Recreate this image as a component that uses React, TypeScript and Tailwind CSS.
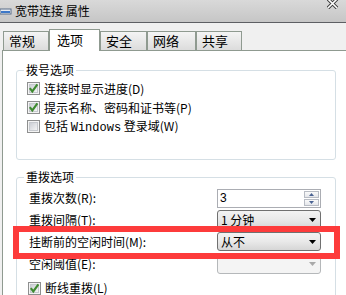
import React from "react";

const cjk = { fontFamily: '"Noto Sans CJK SC", "Noto Sans", sans-serif' };

const CheckBox = ({ checked }: { checked: boolean }) => (
    <svg width="13" height="13" viewBox="0 0 13 13" className="shrink-0">
        <defs>
            <linearGradient id="cbg" x1="0" y1="0" x2="1" y2="1">
                <stop offset="0" stopColor="#c9ccd2" />
                <stop offset="1" stopColor="#f7f7f7" />
            </linearGradient>
        </defs>
        <rect x="0.5" y="0.5" width="12" height="12" fill="#f4f4f4" stroke="#8e8f8f" />
        <rect x="2.5" y="2.5" width="8" height="8" fill="url(#cbg)" stroke="#c6c9ce" />
        {checked && (
            <path d="M2.8 6.2 L5.3 9.4 L10.4 2.4" fill="none" stroke="#3f8a30" strokeWidth="2.1" />
        )}
    </svg>
);

const Arrow = ({ color = "#000" }: { color?: string }) => (
    <svg width="7" height="4" viewBox="0 0 7 4">
        <path d="M0 0 H7 L3.5 4 Z" fill={color} />
    </svg>
);

const Combo = ({ value, disabled }: { value?: string; disabled?: boolean }) => (
    <div
        className={
            disabled
                ? "w-[104px] h-[19px] rounded-[3px] border border-[#b5b8ba] bg-[#f4f4f4] flex items-center justify-end pr-[4px]"
                : "w-[104px] h-[19px] rounded-[3px] border border-[#707070] bg-linear-to-b from-[#f3f3f3] via-[#e9e9e9] to-[#d6d6d6] flex items-center justify-between pl-[3px] pr-[4px]"
        }
    >
        {value && <span className="text-[12px] leading-[14px] text-black">{value}</span>}
        <Arrow color={disabled ? "#a9a9a9" : "#000"} />
    </div>
);

const SpinBox = () => (
    <div className="w-[104px] h-[19px] border border-[#abadb3] bg-white flex items-center justify-between pl-[2px] pr-[1px]">
        <span className="text-[12px] leading-[14px] text-black" style={{ fontFamily: '"Liberation Sans", sans-serif' }}>3</span>
        <div className="flex flex-col gap-[1px]">
            {[0, 1].map((i) => (
                <div key={i} className="w-[15px] h-[7px] border border-[#b8bcc4] bg-linear-to-b from-[#fafafa] to-[#e4e6ea] flex items-center justify-center">
                    <svg width="5" height="3" viewBox="0 0 5 3">
                        <path d={i === 0 ? "M0 3 H5 L2.5 0 Z" : "M0 0 H5 L2.5 3 Z"} fill="#4a6393" />
                    </svg>
                </div>
            ))}
        </div>
    </div>
);

const Tab = ({ label, width, active }: { label: string; width: string; active?: boolean }) =>
    active ? (
        <div className={`${width} h-[22px] -mb-[1px] relative z-10 bg-white border border-b-0 border-[#8f9a90] pl-[7px] pb-[2px] flex items-center text-[13px] text-black`}>
            {label}
        </div>
    ) : (
        <div className={`${width} h-[19px] bg-linear-to-b from-[#f4f4f4] to-[#dcdcdc] border border-b-0 border-[#8f9a90] pl-[5px] flex items-center text-[13px] text-black`}>
            {label}
        </div>
    );

const Row = ({ label, h, children }: { label: string; h: string; children: React.ReactNode }) => (
    <div className={`${h} flex items-center justify-between pl-[12px] pr-[14px]`}>
        <span className="text-[12px] leading-[14px] text-black">{label}</span>
        {children}
    </div>
);

export default function App() {
    return (
        <div className="w-[346px] h-[295px] overflow-hidden bg-[#f0f0f0] relative" style={cjk}>
            {/* title bar */}
            <div className="h-[23px] bg-linear-to-b from-[#d9d9d9] to-[#c6c6c6] border-b border-[#5d5f63] flex items-start justify-between">
                <div className="flex items-center h-[22px]">
                    <svg width="13" height="8" viewBox="0 0 13 8" className="mt-[2px]">
                        <rect x="0" y="1" width="11" height="5" fill="#e9edf2" stroke="#5b6f8a" strokeWidth="1" />
                        <rect x="1" y="3" width="9" height="2" fill="#3d78c8" />
                    </svg>
                    <span className="ml-[2px] text-[12px] leading-[14px] text-black">宽带连接 属性</span>
                </div>
                <svg width="12" height="9" viewBox="0 0 12 9" className="mr-[7px]">
                    <path d="M1 -1 L10 8 M10 -1 L1 8" stroke="#3a3a3a" strokeWidth="3.4" />
                    <path d="M1 -1 L10 8 M10 -1 L1 8" stroke="#ffffff" strokeWidth="1.6" />
                </svg>
            </div>

            {/* tabs */}
            <div className="mt-[6px] flex items-end pl-[3px] h-[21px]">
                <Tab label="常规" width="w-[46px]" />
                <Tab label="选项" width="w-[51px]" active />
                <Tab label="安全" width="w-[47px]" />
                <Tab label="网络" width="w-[49px]" />
                <Tab label="共享" width="w-[46px]" />
            </div>

            {/* tab page */}
            <div className="ml-[2px] h-[250px] bg-white border-t border-l border-[#8f9a90] pt-[12px]">
                <fieldset className="ml-[13px] w-[320px] border border-[#d5dfe5] rounded-[3px] pl-[10px] pt-[2px] pb-[23px]">
                    <legend className="ml-[-3px] px-[2px] text-[12px] leading-[14px] text-black">拨号选项</legend>
                    <div className="h-[19px] flex items-center gap-[4px] text-[12px] leading-[14px] text-black">
                        <CheckBox checked />
                        <span>连接时显示进度(D)</span>
                    </div>
                    <div className="h-[19px] flex items-center gap-[4px] text-[12px] leading-[14px] text-black">
                        <CheckBox checked />
                        <span>提示名称、密码和证书等(P)</span>
                    </div>
                    <div className="h-[19px] flex items-center gap-[4px] text-[12px] leading-[14px] text-black">
                        <CheckBox checked={false} />
                        <span>
                            包括 <span style={{ fontFamily: '"Liberation Mono", monospace' }}>Windows</span> 登录域(W)
                        </span>
                    </div>
                </fieldset>

                <fieldset className="ml-[13px] mt-[10px] w-[320px] h-[140px] border border-[#d5dfe5] rounded-[3px] pt-[3px]">
                    <legend className="ml-[7px] px-[2px] text-[12px] leading-[14px] text-black">重拨选项</legend>
                    <Row label="重拨次数(R):" h="h-[22px]">
                        <SpinBox />
                    </Row>
                    <Row label="重拨间隔(T):" h="h-[21px]">
                        <Combo value="1 分钟" />
                    </Row>
                    <Row label="挂断前的空闲时间(M):" h="h-[23px]">
                        <Combo value="从不" />
                    </Row>
                    <Row label="空闲阈值(E):" h="h-[22px]">
                        <Combo disabled />
                    </Row>
                    <div className="mt-[3px] h-[20px] flex items-center gap-[4px] pl-[11px] text-[12px] leading-[14px] text-black">
                        <CheckBox checked />
                        <span>断线重拨(L)</span>
                    </div>
                </fieldset>
            </div>

            {/* red highlight annotation */}
            <div className="absolute left-[13px] top-[226px] w-[327px] h-[33px] border-[6px] border-[#fd3b3b] pointer-events-none" />
        </div>
    );
}
